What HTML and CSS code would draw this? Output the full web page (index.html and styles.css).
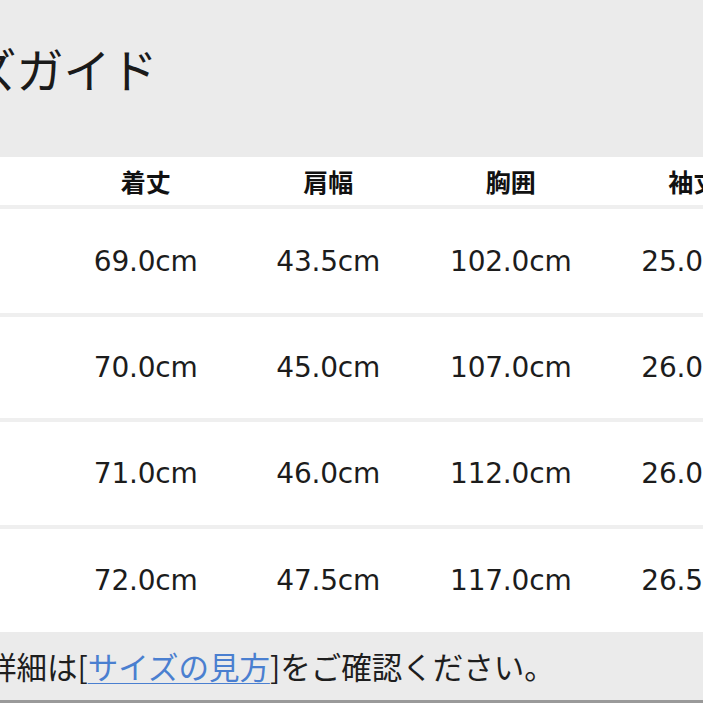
FILE: index.html
```html
<!DOCTYPE html>
<html lang="ja">
<head>
<meta charset="utf-8">
<link rel="stylesheet" href="styles.css">
</head>
<body>
<div class="page">
  <div class="title-bar">
    <h1 class="title">サイズガイド</h1>
  </div>
  <div class="size-table">
    <div class="row head">
      <div class="cell">サイズ</div>
      <div class="cell">着丈</div>
      <div class="cell">肩幅</div>
      <div class="cell">胸囲</div>
      <div class="cell">袖丈</div>
    </div>
    <div class="row body r1">
      <div class="cell">S</div>
      <div class="cell">69.0cm</div>
      <div class="cell">43.5cm</div>
      <div class="cell">102.0cm</div>
      <div class="cell">25.0cm</div>
    </div>
    <div class="row body r2">
      <div class="cell">M</div>
      <div class="cell">70.0cm</div>
      <div class="cell">45.0cm</div>
      <div class="cell">107.0cm</div>
      <div class="cell">26.0cm</div>
    </div>
    <div class="row body r3">
      <div class="cell">L</div>
      <div class="cell">71.0cm</div>
      <div class="cell">46.0cm</div>
      <div class="cell">112.0cm</div>
      <div class="cell">26.0cm</div>
    </div>
    <div class="row body r4 last">
      <div class="cell">XL</div>
      <div class="cell">72.0cm</div>
      <div class="cell">47.5cm</div>
      <div class="cell">117.0cm</div>
      <div class="cell">26.5cm</div>
    </div>
  </div>
  <div class="note">
    <p class="note-text">詳細は[<a class="note-link" href="#">サイズの見方</a>]をご確認ください。</p>
  </div>
</div>
</body>
</html>
```

FILE: styles.css
```css
html, body {
  margin: 0;
  padding: 0;
  overflow: hidden;
  background: #ffffff;
}

.page {
  width: 1000px;
  margin-left: -128px;
  font-family: "Noto Sans CJK JP", "Noto Sans", sans-serif;
  color: #141414;
}

.title-bar {
  height: 157px;
  background: #ebebeb;
  box-sizing: border-box;
  padding: 44px 0 0 5px;
}

.title {
  margin: 0;
  font-size: 47px;
  line-height: 47px;
  font-weight: 400;
  color: #1a1a1a;
}

.size-table {
  display: flex;
  flex-direction: column;
}

.row {
  display: grid;
  grid-template-columns: repeat(5, 182.5px);
  align-items: center;
  background: #ffffff;
}

.row .cell {
  text-align: center;
  white-space: nowrap;
}

.head {
  height: 48px;
  border-bottom: 4px solid #efefef;
  font-size: 25px;
  font-weight: 700;
  color: #111111;
}

.body {
  font-family: "DejaVu Sans", "Liberation Sans", sans-serif;
  font-size: 28px;
  letter-spacing: -0.2px;
  color: #1c1c1c;
  border-bottom: 4px solid #efefef;
}

.r1 { height: 104px; }
.r2 { height: 101px; }
.r3 { height: 103px; }
.r4 { height: 103px; }

.last {
  border-bottom: none;
}

.note {
  height: 68px;
  background: #ebebeb;
  border-bottom: 3px solid #9a9a9a;
  box-sizing: content-box;
  display: flex;
  align-items: center;
  padding-left: 114px;
}

.note-text {
  margin: 0;
  font-size: 30.5px;
  line-height: 1;
  color: #1e1e1e;
  white-space: nowrap;
}

.note-link {
  color: #4a7fd0;
  text-decoration: underline;
  text-underline-offset: 4px;
  text-decoration-thickness: 1px;
}
```
